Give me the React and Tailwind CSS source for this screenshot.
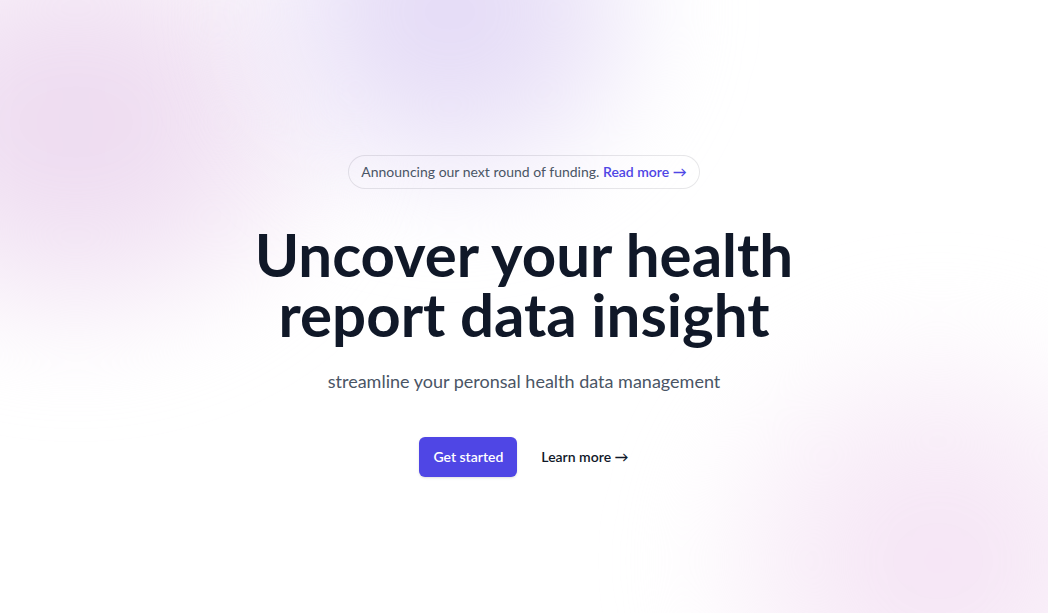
import React from 'react';

export default function App() {
  return (
    <div className="relative isolate h-[613px] w-full overflow-hidden bg-white font-['Lato','Noto_Sans',sans-serif]">
      {/* decorative blurred blobs */}
      <div className="pointer-events-none absolute -top-32 -left-56 -z-10 h-[500px] w-[600px] rounded-full bg-[radial-gradient(closest-side,#ecd8ef_0%,#f2e4f4_45%,rgba(255,255,255,0)_100%)] blur-2xl" />
      <div className="pointer-events-none absolute -top-52 left-[210px] -z-10 h-[440px] w-[480px] rounded-full bg-[radial-gradient(closest-side,#e2d8f6_0%,#ebe4f8_45%,rgba(255,255,255,0)_100%)] blur-2xl" />
      <div className="pointer-events-none absolute -bottom-52 -right-40 -z-10 h-[520px] w-[540px] rounded-full bg-[radial-gradient(closest-side,#f4e2f4_0%,#f8edf8_45%,rgba(255,255,255,0)_100%)] blur-2xl" />

      <div className="mx-auto flex max-w-2xl flex-col items-center pt-[156px] text-center">
        <div className="rounded-full px-3 py-[6px] text-sm leading-5 text-gray-600 ring-1 ring-gray-900/10">
          Announcing our next round of funding.{' '}
          <a href="#" className="font-semibold text-[#4f46e5]">
            Read more <span aria-hidden="true">&rarr;</span>
          </a>
        </div>

        <h1 className="mt-[36px] text-6xl font-bold leading-[60px] text-gray-900">
          Uncover your health
          <br />
          report data insight
        </h1>
        <p className="mt-[21px] text-lg leading-8 text-gray-600">
          streamline your peronsal health data management
        </p>
        <div className="mt-[40px] flex items-center justify-center gap-x-6">
          <a
            href="#"
            className="rounded-md bg-[#4f46e5] px-3.5 py-2.5 text-sm font-semibold text-white shadow-sm"
          >
            Get started
          </a>
          <a href="#" className="text-sm font-semibold leading-6 text-gray-900">
            Learn more <span aria-hidden="true">&rarr;</span>
          </a>
        </div>
      </div>
    </div>
  );
}
